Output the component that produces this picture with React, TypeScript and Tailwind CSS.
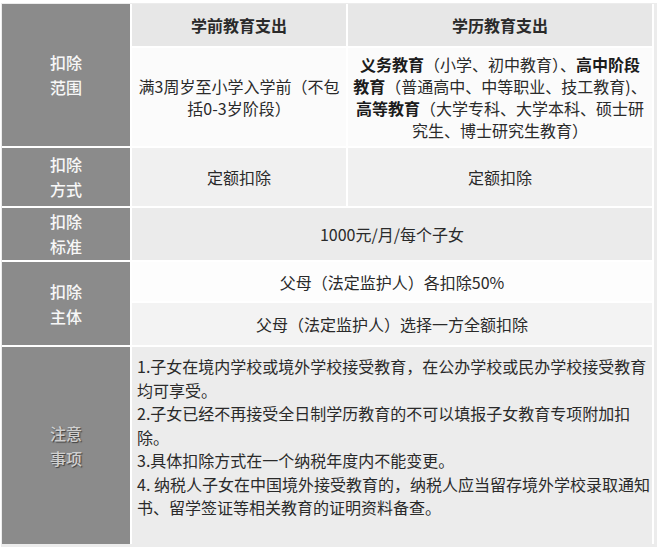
import type { ReactNode } from "react";

const font = { fontFamily: '"Noto Sans CJK SC", "Noto Sans", sans-serif' };

function Label({ lines, dim, className }: { lines: string[]; dim?: boolean; className: string }) {
  return (
    <div
      className={`flex flex-col items-center justify-center bg-[#8b8b8b] text-[16px] leading-[25px] font-medium ${
        dim ? "text-[#cfcfcf] [text-shadow:1px_1px_1px_#3f3f3f]" : "text-[#f7f7f7]"
      } ${className}`}
    >
      {lines.map((l) => (
        <span key={l}>{l}</span>
      ))}
    </div>
  );
}

function Cell({ children, className }: { children: ReactNode; className: string }) {
  return (
    <div className={`flex flex-col items-center justify-center text-center text-[16px] leading-[22px] text-[#2a2a2a] ${className}`}>
      {children}
    </div>
  );
}

const notes = [
  ["1.子女在境内学校或境外学校接受教育，在公办学校或民办学校接受教育", "均可享受。"],
  ["2.子女已经不再接受全日制学历教育的不可以填报子女教育专项附加扣", "除。"],
  ["3.具体扣除方式在一个纳税年度内不能变更。"],
  ["4. 纳税人子女在中国境外接受教育的，纳税人应当留存境外学校录取通知", "书、留学签证等相关教育的证明资料备查。"],
];

export default function App() {
  return (
    <div className="h-[553px] w-[660px] bg-white pl-[2px] pt-[4px]" style={font}>
      <div className="grid w-[652px] grid-cols-[128px_214px_304px] grid-rows-[42px_98px_58px_52px_39px_42px_197px] gap-[2px] bg-white shadow-[1px_1px_0_2px_#ececec]">
        <Label lines={["扣除", "范围"]} className="row-span-2" />
        <Cell className="bg-[#e7e7e7] font-bold">学前教育支出</Cell>
        <Cell className="bg-[#e7e7e7] font-bold">学历教育支出</Cell>

        <Cell className="bg-[#fbfbfb]">
          <span className="whitespace-nowrap">满3周岁至小学入学前（不包</span>
          <span className="whitespace-nowrap">括0-3岁阶段）</span>
        </Cell>
        <Cell className="bg-[#fbfbfb]">
          <span className="whitespace-nowrap">
            <b className="font-bold text-[#1c1c1c]">义务教育</b>（小学、初中教育）、<b className="font-bold text-[#1c1c1c]">高中阶段</b>
          </span>
          <span className="whitespace-nowrap">
            <b className="font-bold text-[#1c1c1c]">教育</b>（普通高中、中等职业、技工教育)、
          </span>
          <span className="whitespace-nowrap">
            <b className="font-bold text-[#1c1c1c]">高等教育</b>（大学专科、大学本科、硕士研
          </span>
          <span className="whitespace-nowrap">究生、博士研究生教育）</span>
        </Cell>

        <Label lines={["扣除", "方式"]} className="" />
        <Cell className="bg-[#f0f0f0]">定额扣除</Cell>
        <Cell className="bg-[#f0f0f0]">定额扣除</Cell>

        <Label lines={["扣除", "标准"]} className="" />
        <Cell className="col-span-2 bg-[#ebebeb]">1000元/月/每个子女</Cell>

        <Label lines={["扣除", "主体"]} className="row-span-2" />
        <Cell className="col-span-2 bg-[#fdfdfd]">父母（法定监护人）各扣除50%</Cell>
        <Cell className="col-span-2 bg-[#f3f3f3]">父母（法定监护人）选择一方全额扣除</Cell>

        <Label lines={["注意", "事项"]} dim className="" />
        <div className="col-span-2 flex flex-col justify-center bg-[#ececec] pb-[16px] pl-[5px] text-[16px] leading-[23.5px] text-[#2a2a2a]">
          {notes.map((n) =>
            n.map((line) => (
              <span key={line} className="whitespace-nowrap">
                {line}
              </span>
            )),
          )}
        </div>
      </div>
    </div>
  );
}
